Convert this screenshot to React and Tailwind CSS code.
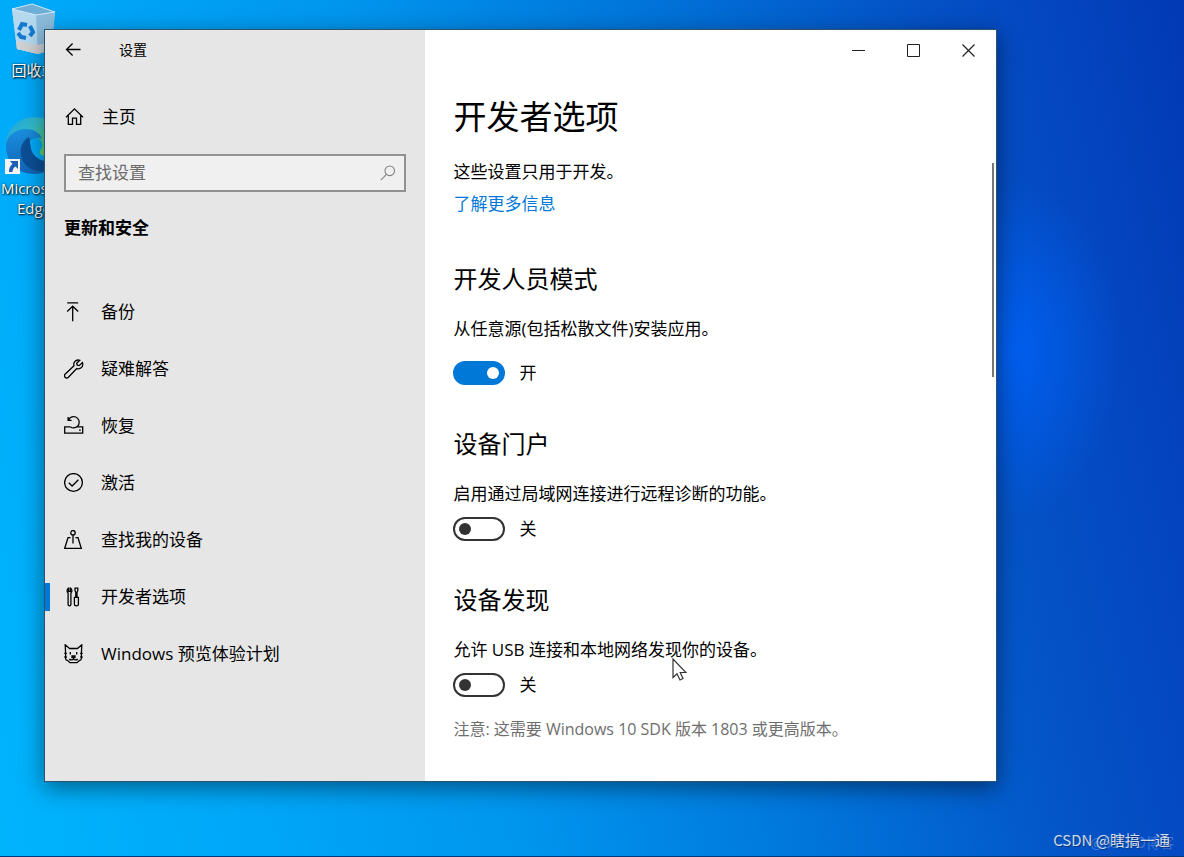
import React, { useState } from "react";

const navItems = [
  { label: "备份", icon: BackupIcon },
  { label: "疑难解答", icon: WrenchIcon },
  { label: "恢复", icon: RecoveryIcon },
  { label: "激活", icon: ActivationIcon },
  { label: "查找我的设备", icon: FindDeviceIcon },
  { label: "开发者选项", icon: ToolsIcon, active: true },
  { label: "Windows 预览体验计划", icon: InsiderIcon },
];

function Icon({ children, className = "size-5" }) {
  return (
    <svg
      viewBox="0 0 20 20"
      fill="none"
      stroke="currentColor"
      strokeWidth="1.3"
      aria-hidden="true"
      className={`shrink-0 ${className}`}
    >
      {children}
    </svg>
  );
}

function BackIcon() {
  return (
    <Icon>
      <path d="M2.5 9.5H16.500M8.600 3.500L2.500 9.5l6.100 6" />
    </Icon>
  );
}

function HomeIcon() {
  return (
    <Icon>
      <path d="M2 10.2L10.500 1.800l8.500 8.400M4.300 8.200V17.400h4.200v-6.200h4v6.200h4.200V8.200" />
    </Icon>
  );
}

function BackupIcon() {
  return (
    <Icon>
      <path d="M3.200.800h11M8.700 19.200V4.200M3.200 9.500l5.500-5.300 5.500 5.300" />
    </Icon>
  );
}

function WrenchIcon() {
  return (
    <Icon>
      <path d="M15.800 1.300c-2.600-1-5.600.7-6 3.300-.1.800 0 1.500.2 2.200L1.300 14.900c-1 1-1 2.400-.2 3.300.9.900 2.300.9 3.300 0l8.300-8.600c2.900.9 6-1.200 6.100-4.200 0-.8-.1-1.400-.4-1.900l-3.200 3.100-2-.5-.5-1.900z" />
    </Icon>
  );
}

function RecoveryIcon() {
  return (
    <Icon>
      <path d="M6.500 10.900H.7v6.300h18v-6.300h-5.500M15 14.100h1.800" />
      <path d="M6.500 10.900c.9.700 1.900 1 3.200 1 3.100 0 5.500-2.500 5.500-5.600S12.800.7 9.700.7C7.400.7 5.500 2 4.600 4M4.100.9v3.500H7.600" />
    </Icon>
  );
}

function ActivationIcon() {
  return (
    <Icon>
      <circle cx="9.500" cy="9.500" r="8.900" />
      <path d="M4.800 9.800l3.300 3.200 6.300-6.300" />
    </Icon>
  );
}

function FindDeviceIcon() {
  return (
    <Icon>
      <circle cx="9" cy="2.700" r="2.200" />
      <path d="M9 4.900v8.600M6.500 7.700H4L.7 18.300h16.600L14 7.700h-2.500" />
    </Icon>
  );
}

function ToolsIcon() {
  return (
    <Icon>
      <path d="M4.600 1.200v3.200h1.800V1.200c1 .5 1.500 1.300 1.500 2.500 0 1.100-.4 1.700-1 2.200v11.600c0 1.900-2.800 1.900-2.800 0V5.900c-.6-.5-1-1.100-1-2.200 0-1.200.5-2 1.500-2.500z" />
      <path d="M11 1.200h2.800v2.500l-.8 1.500v5.200h-1.200V5.200L11 3.700zM10.400 10.400h4v7c0 1.900-4 1.900-4 0z" />
    </Icon>
  );
}

function InsiderIcon() {
  return (
    <Icon>
      <path d="M1.600 9.300L1.200.800l4.400 3.700h7.800L17.800.8l-.4 8.500v5.200c0 1.200-.8 1.800-2 2L13 18.700H6l-2.400-2.200c-1.200-.2-2-.8-2-2z" />
      <path d="M.3 9.300h2.500M.3 13h2.500M16.200 9.300h2.500M16.200 13h2.500M6.300 8v2.600M12.700 8v2.600M8 12h3v1.500H8z" />
      <path d="M9.500 13.500v1.200c-.8 1.600-3.200 1.600-4.200.3M9.500 14.700c.8 1.600 3.200 1.600 4.200.3" />
    </Icon>
  );
}

function SearchIcon() {
  return (
    <Icon className="size-4 text-[#808080]">
      <circle cx="12.200" cy="7.300" r="6" />
      <path d="M8 11.700L1 18.800" />
    </Icon>
  );
}

function RecycleBin() {
  return (
    <svg viewBox="0 0 46 52" className="h-[52px] w-[46px]" aria-hidden="true">
      <path d="M1 6L44 9 40 47 27 51 6 46z" fill="#a9d3ee" />
      <path d="M1 6L25 12 27 51 6 46z" fill="#b4d9ef" />
      <path d="M25 12L44 9 40 47 27 51z" fill="#8cbcdc" />
      <path d="M5 38l22 4 14-4-1 9-13 4-21-5z" fill="#cfd1d3" />
      <path d="M1 6L21 1 44 9 25 12z" fill="#6faed6" stroke="#d5e9f4" />
      <g fill="none" stroke="#1379d1" strokeWidth="4">
        <path d="M8 27l3-6 5 1M19 23l3 6-3 4M15 35l-5-1-3-4" />
      </g>
    </svg>
  );
}

function EdgeLogo() {
  return (
    <svg viewBox="0 0 58 58" className="size-[58px]" aria-hidden="true">
      <defs>
        <linearGradient id="edgeTop" x1="0" y1="0" x2="1" y2="0.600">
          <stop offset="0" stopColor="#1b9de2" />
          <stop offset="0.500" stopColor="#35c1c9" />
          <stop offset="1" stopColor="#66d94e" />
        </linearGradient>
        <linearGradient id="edgeLeft" x1="0" y1="0" x2="0" y2="1">
          <stop offset="0" stopColor="#1a8fe0" />
          <stop offset="1" stopColor="#1264b4" />
        </linearGradient>
      </defs>
      <path d="M1 28C2 12 14 1 29 1c16 0 28 11 28 25 0 9-7 14-15 14-7 0-9-3-6-7 4-6-2-13-11-13C13 20 4 26 1 28z" fill="url(#edgeTop)" />
      <path d="M1 30c0-10 10-17 20-17 9 0 15 5 16 10-8-4-15 2-15 11 0 11 9 20 21 20-4 3-9 4-14 4C13 58 1 46 1 30z" fill="url(#edgeLeft)" />
      <path d="M24 21c-9 5-11 17-5 26 6 8 18 11 28 5 4-2 7-5 9-9-13 6-27 1-30-10-1-5-1-9-2-12z" fill="#0c4f96" />
    </svg>
  );
}

function DesktopIcons() {
  return (
    <div className="absolute top-0 left-0 flex w-[68px] flex-col items-center text-[15px] leading-5 text-white [text-shadow:1px_1px_2px_#000,0_0_2px_#000a]">
      <div className="flex flex-col items-center pt-[3px]">
        <RecycleBin />
        <span className="mt-[5px]">回收站</span>
      </div>
      <div className="mt-9 flex flex-col items-center">
        <div className="relative">
          <EdgeLogo />
          <svg viewBox="0 0 15 15" className="absolute bottom-0 left-0 size-[15px]" aria-hidden="true">
            <path d="M0 0h15v15H0z" fill="#f4f4f4" />
            <path d="M5 2h8v8l-2.500-2.500c-2 1-3 3-3 5.500H4c0-4 1-6 3.500-8z" fill="#1d5fb4" />
          </svg>
        </div>
        <span className="mt-1 text-center">
          Microsoft
          <br />
          Edge
        </span>
      </div>
    </div>
  );
}

function Sidebar() {
  return (
    <aside className="w-2/5 shrink-0 bg-[#e6e6e6]">
      {/* Title */}
      <div className="flex h-10 items-center pl-[19px]">
        <button type="button" aria-label="返回">
          <BackIcon />
        </button>
        <span className="ml-[35px] text-sm">设置</span>
      </div>

      <a href="#home" className="mt-[35px] flex h-6 items-center gap-[18px] pl-[19px]">
        <HomeIcon />
        主页
      </a>

      {/* Search */}
      <div className="mx-[19px] mt-[25px] flex h-[38px] items-center border-2 border-[#919191] bg-[#f0f0f0] pr-2 pl-3">
        <input
          type="text"
          aria-label="查找设置"
          placeholder="查找设置"
          className="min-w-0 flex-1 bg-transparent outline-none placeholder:text-[#6b6b6b]"
        />
        <SearchIcon />
      </div>

      <h2 className="mt-6 pl-[19px] leading-6 font-bold">更新和安全</h2>

      <nav className="mt-[43px]">
        {navItems.map(({ label, icon: ItemIcon, active }) => (
          <a
            key={label}
            href="#"
            aria-current={active ? "page" : undefined}
            className="flex h-[57px] items-center"
          >
            <span className={`h-7 w-[5px] ${active ? "bg-[#0078d7]" : ""}`} />
            <span className="mr-[17px] ml-3.5">
              <ItemIcon />
            </span>
            {label}
          </a>
        ))}
      </nav>
    </aside>
  );
}

function Toggle({ label, defaultOn = false }) {
  const [on, setOn] = useState(defaultOn);

  return (
    <label className="flex h-6 w-fit items-center gap-3.5">
      <input
        type="checkbox"
        role="switch"
        aria-label={label}
        checked={on}
        onChange={() => setOn(!on)}
        className="flex h-6 w-[52px] appearance-none items-center rounded-full border-2 border-[#333] px-1 before:size-3 before:rounded-full before:bg-[#333] before:content-[''] checked:justify-end checked:border-[#0078d7] checked:bg-[#0078d7] checked:before:bg-white"
      />
      <span>{on ? "开" : "关"}</span>
    </label>
  );
}

function WindowControls() {
  return (
    <div className="flex h-10 justify-end">
      <button type="button" aria-label="最小化" className="flex w-[55px] items-center justify-center">
        <svg viewBox="0 0 13 13" className="size-[13px]" stroke="#222" fill="none">
          <path d="M0 6.500h13" />
        </svg>
      </button>
      <button type="button" aria-label="最大化" className="flex w-[55px] items-center justify-center">
        <svg viewBox="0 0 13 13" className="size-[13px]" stroke="#222" fill="none">
          <path d="M.5.5h12v12H.5z" />
        </svg>
      </button>
      <button type="button" aria-label="关闭" className="flex w-[55px] items-center justify-center">
        <svg viewBox="0 0 13 13" className="size-[13px]" stroke="#222" fill="none" strokeWidth="1.200">
          <path d="M.5.5l12 12M12.500.5l-12 12" />
        </svg>
      </button>
    </div>
  );
}

function Content() {
  return (
    <main className="relative min-w-0 flex-1 bg-white pb-10">
      <WindowControls />

      <div className="px-7">
        <h1 className="mt-[27px] text-[33px] leading-10">开发者选项</h1>
        <p className="mt-[23px]">这些设置只用于开发。</p>
        <a href="#more" className="mt-2 block w-fit text-[#0078d7]">
          了解更多信息
        </a>

        {/* Developer mode */}
        <section className="mt-[47px]">
          <h2 className="text-2xl">开发人员模式</h2>
          <p className="mt-[22px] mb-5">从任意源(包括松散文件)安装应用。</p>
          <Toggle label="开发人员模式" defaultOn />
        </section>

        {/* Device portal */}
        <section className="mt-[43px]">
          <h2 className="text-2xl">设备门户</h2>
          <p className="mt-[22px] mb-[11px]">启用通过局域网连接进行远程诊断的功能。</p>
          <Toggle label="设备门户" />
        </section>

        {/* Device discovery */}
        <section className="mt-[43px]">
          <h2 className="text-2xl">设备发现</h2>
          <p className="mt-[22px] mb-[11px]">允许 USB 连接和本地网络发现你的设备。</p>
          <Toggle label="设备发现" />
          <p className="mt-5 text-base text-[#6e6e6e]">
            注意: 这需要 Windows 10 SDK 版本 1803 或更高版本。
          </p>
        </section>
      </div>

      {/* Scroll thumb */}
      <div className="absolute top-[133px] right-0.5 h-[214px] w-0.5 bg-[#777]" />

      {/* Pointer */}
      <svg viewBox="0 0 15 23" className="absolute top-[628px] left-[247px] h-[23px] w-[15px]" aria-hidden="true">
        <path d="M1 1v18.500l4-3.800 3 6.300 3-1.500-2.800-6H14z" fill="#fff" stroke="#333" strokeWidth="1.200" />
      </svg>
    </main>
  );
}

function App() {
  return (
    <div
      lang="zh-CN"
      className="relative flex min-h-screen overflow-hidden border-b border-[#01397c] bg-[radial-gradient(ellipse_110px_170px_at_1010px_350px,#005ff0_0%,#005ff000_100%),linear-gradient(78deg,#00b4fc_0%,#00a6f8_20%,#0096ee_38%,#0078dc_58%,#0452c6_80%,#0446c0_90%,#0239b4_100%)] pt-[29px] pr-[187px] pb-[74px] pl-11 font-['Open_Sans','Noto_Sans_CJK_SC',sans-serif] text-[17px] leading-6 text-black"
    >
      <DesktopIcons />

      <div className="relative flex flex-1 border border-[#2a5470] shadow-[0_6px_22px_rgba(0,0,0,0.45)]">
        <Sidebar />
        <Content />
      </div>

      {/* Watermarks */}
      <span className="absolute right-2.5 bottom-1 font-['Noto_Sans_CJK_SC',sans-serif] text-sm text-white/25">
        @51CTO博客
      </span>
      <span className="absolute right-3.5 bottom-1 font-['Noto_Sans_CJK_SC',sans-serif] text-[15px] text-white/80 [text-shadow:1px_1px_1px_#0006]">
        CSDN @瞎搞一通
      </span>
    </div>
  );
}

export default App;
